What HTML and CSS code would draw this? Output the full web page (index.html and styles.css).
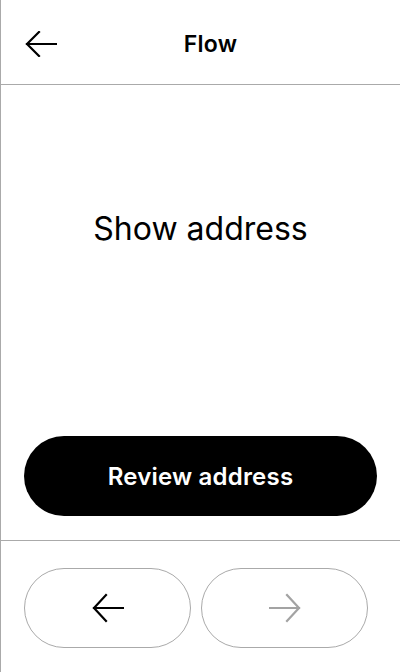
FILE: index.html
```html
<!DOCTYPE html>
<html>
<head>
<meta charset="utf-8">
<link rel="stylesheet" href="styles.css">
</head>
<body>
<div class="screen">
  <header class="header">
    <button class="back" aria-label="Back">
      <svg width="32" height="26" viewBox="0 0 32 26" fill="none" stroke="#000" stroke-width="2.2" stroke-linecap="square">
        <path d="M31 13H2"/>
        <path d="M14 1L2 13l12 12"/>
      </svg>
    </button>
    <h1 class="title">Flow</h1>
    <span class="spacer"></span>
  </header>
  <main class="main">
    <div class="content">
      <p class="message">Show address</p>
    </div>
    <button class="primary">Review address</button>
  </main>
  <footer class="footer">
    <button class="nav">
      <svg width="32" height="30" viewBox="0 0 32 30" fill="none" stroke="#000" stroke-width="2.2" stroke-linecap="square">
        <path d="M31 15H2"/>
        <path d="M14 2L2 15l12 13"/>
      </svg>
    </button>
    <button class="nav">
      <svg width="32" height="30" viewBox="0 0 32 30" fill="none" stroke="#a3a3a3" stroke-width="2.2" stroke-linecap="square">
        <path d="M1 15h29"/>
        <path d="M18 2l12 13-12 13"/>
      </svg>
    </button>
  </footer>
</div>
</body>
</html>
```

FILE: styles.css
```css
* { box-sizing: border-box; }
html, body {
  margin: 0;
  padding: 0;
  background: #fff;
}
body {
  font-family: Inter, "Noto Sans", sans-serif;
  color: #000;
}
.screen {
  width: 400px;
  height: 672px;
  border-left: 1px solid #aaa;
  display: flex;
  flex-direction: column;
}
.header {
  height: 85px;
  border-bottom: 1px solid #aaa;
  display: grid;
  grid-template-columns: 84px 1fr 64px;
  align-items: center;
  padding: 3px 0 0 0;
}
.back {
  justify-self: start;
  margin-left: 24px;
  padding: 0;
  border: 0;
  background: none;
  display: flex;
}
.title {
  margin: 0;
  text-align: center;
  font-size: 23px;
  font-weight: 600;
  letter-spacing: 0.3px;
}
.main {
  flex: 1;
  display: flex;
  flex-direction: column;
  padding: 0 23px 24px 23px;
  border-bottom: 1px solid #aaa;
}
.content {
  flex: 1;
  padding-top: 123px;
}
.message {
  margin: 0;
  text-align: center;
  font-size: 32px;
  line-height: 42px;
  font-weight: 400;
}
.primary {
  height: 80px;
  border: 0;
  border-radius: 40px;
  background: #000;
  color: #fff;
  font-family: inherit;
  font-size: 24px;
  font-weight: 600;
  letter-spacing: 0.2px;
}
.footer {
  display: flex;
  gap: 10px;
  padding: 27px 32px 24px 23px;
}
.nav {
  flex: 1;
  height: 80px;
  border: 1.5px solid #aaa;
  border-radius: 40px;
  background: #fff;
  display: flex;
  align-items: center;
  justify-content: center;
  padding: 0;
}
```
